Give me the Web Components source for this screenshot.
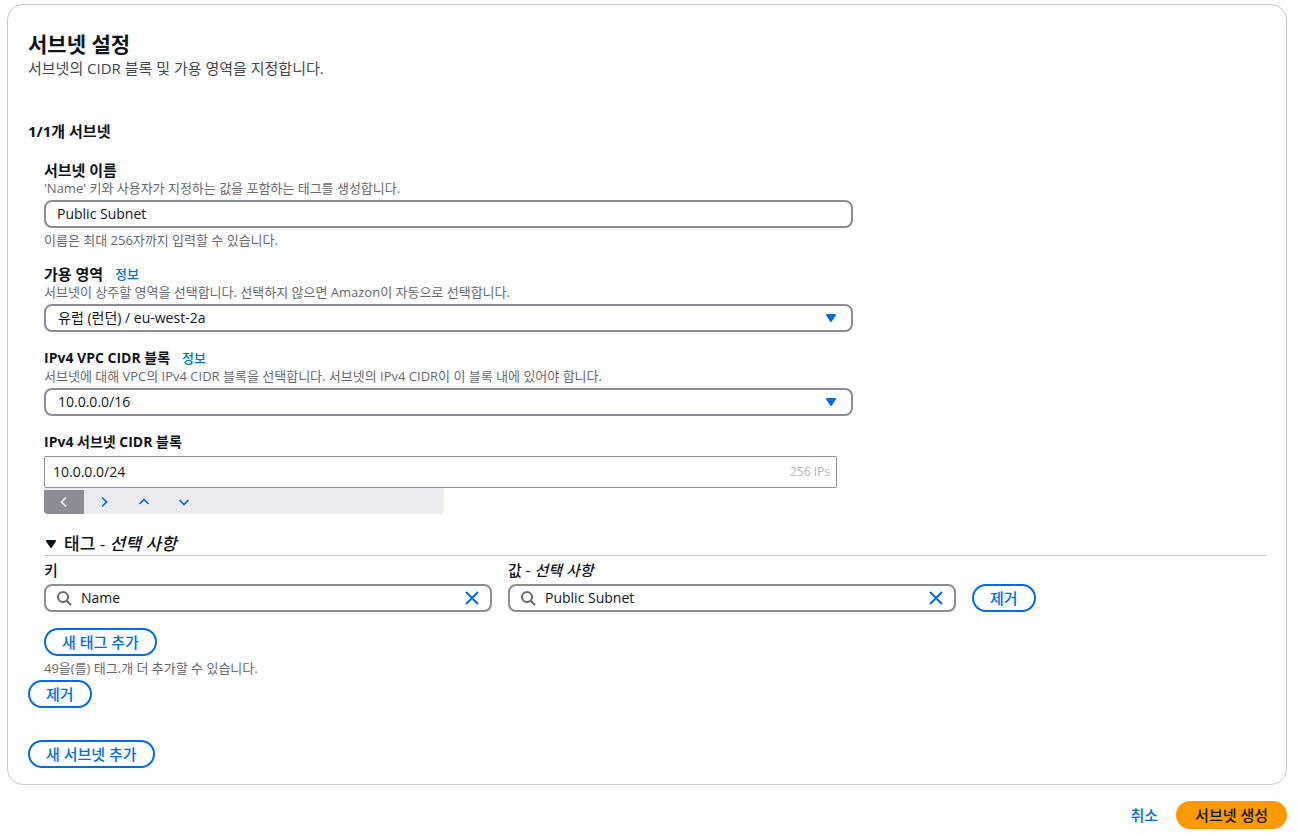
<!DOCTYPE html>
<html lang="ko">
<head>
<meta charset="utf-8">
<meta name="viewport" content="width=device-width, initial-scale=1">
<title>서브넷 생성</title>
<style>
  :root {
    --text: #0f141a;
    --text-muted: #424650;
    --text-hint: #656871;
    --line: #c6c6cd;
    --control-line: #8c8c94;
    --accent: #006ce0;
    --primary: #ff9900;
    --size-title: 21px;
    --size-section: 17px;
    --size-body: 15px;
    --size-value: 14px;
    --size-hint: 13px;
  }
  body {
    margin: 4px 13px 8px 7px;
    background: #fff;
    color: var(--text);
    font-family: "Open Sans", "Noto Sans CJK KR", sans-serif;
    font-size: 14px;
    line-height: 20px;
  }
</style>
</head>
<body>
<subnet-page></subnet-page>

<script>
const define = (name, html, setup) => {
  const template = document.createElement('template');
  template.innerHTML = `<style>
    *, *::before, *::after { box-sizing: border-box; }
    input, select, button { font-family: inherit; }
    svg { display: block; flex: none; }
  </style>${html}`;
  customElements.define(name, class extends HTMLElement {
    constructor() {
      super();
      this.attachShadow({ mode: 'open' }).append(template.content.cloneNode(true));
    }
    connectedCallback() {
      if (setup) setup(this, this.shadowRoot);
    }
  });
};

const fieldStyles = `
  :host { display: block; }
  label { display: block; font-size: var(--size-value); font-weight: 700; line-height: 20px; }
  label:lang(ko) { font-size: var(--label-size, var(--size-value)); }
  .head { display: flex; gap: 12px; align-items: center; }
  .head a { color: var(--accent); font-size: var(--size-hint); font-weight: 500; line-height: 20px; text-decoration: none; }
  .hint { color: var(--text-hint); font-size: var(--size-hint); line-height: 16px; }
  .box { margin-top: 4px; height: 28px; border: 2px solid var(--control-line); border-radius: 8px; background: #fff; }
  input, select {
    width: 100%; min-width: 0; height: 100%; margin: 0; border: 0; outline: 0; background: none;
    color: var(--text); font-size: var(--size-value); line-height: 20px;
  }
`;

define('ui-button', `
  <style>
    :host { display: inline-flex; }
    button {
      height: 28px; padding: 0 16px; border: 2px solid var(--accent); border-radius: 20px;
      background: #fff; color: var(--accent); font-size: var(--size-body); font-weight: 500;
      line-height: 20px; white-space: nowrap; cursor: pointer;
    }
    :host([variant="primary"]) button { padding: 0 17px; background: var(--primary); border-color: var(--primary); color: var(--text); }
    :host([variant="link"]) button { background: none; border-color: transparent; }
  </style>
  <button type="button"><slot></slot></button>
`);

define('text-field', `
  <style>${fieldStyles}
    input { padding: 0 11px 2px; }
    .note { margin-top: 4px; }
  </style>
  <label for="control"></label>
  <div class="hint" id="hint"></div>
  <div class="box"><input id="control" type="text" aria-describedby="hint note"></div>
  <div class="hint note" id="note"><slot></slot></div>
`, (host, root) => {
  root.querySelector('label').textContent = host.getAttribute('label');
  root.querySelector('#hint').textContent = host.getAttribute('hint');
  root.querySelector('input').value = host.getAttribute('value');
});

define('select-field', `
  <style>${fieldStyles}
    .box { display: grid; align-items: center; }
    .box > * { grid-area: 1 / 1; }
    select { appearance: none; padding: 0 40px 0 12px; }
    svg { justify-self: end; margin-right: 12px; pointer-events: none; }
  </style>
  <div class="head"><label for="control"></label><a href="#info">정보</a></div>
  <div class="hint" id="hint"></div>
  <div class="box">
    <select id="control" aria-describedby="hint"><option></option></select>
    <svg width="16" height="16" viewBox="0 0 16 16" aria-hidden="true"><path d="M4 5h8l-4 6z" fill="#006ce0" stroke="#006ce0" stroke-width="2" stroke-linejoin="round"/></svg>
  </div>
`, (host, root) => {
  root.querySelector('label').textContent = host.getAttribute('label');
  root.querySelector('#hint').textContent = host.getAttribute('hint');
  root.querySelector('option').textContent = host.getAttribute('value');
});

define('cidr-field', `
  <style>${fieldStyles}
    :host { padding-right: 16px; }
    .box { display: flex; align-items: center; height: 32px; border-width: 1px; border-radius: 2px; padding: 0 6px 0 8px; }
    input { padding: 0 0 2px; }
    .count { color: #b4b4bb; font-size: 12px; line-height: 16px; white-space: nowrap; }
    .steps { display: flex; max-width: 400px; height: 26px; padding-top: 2px; background: #ebebf0; border-radius: 0 0 4px 4px; overflow: hidden; }
    .steps button { display: grid; place-items: center; width: 40px; padding: 0; border: 0; background: none; color: var(--accent); cursor: pointer; }
    .steps button:disabled { background: var(--control-line); color: #ebebf0; }
    path { fill: none; stroke: currentColor; stroke-width: 1.75; }
  </style>
  <label for="control">IPv4 서브넷 CIDR 블록</label>
  <div class="box"><input id="control" type="text" value="10.0.0.0/24"><span class="count">256 IPs</span></div>
  <div class="steps">
    <button type="button" disabled aria-label="이전 블록"><svg width="16" height="16" viewBox="0 0 16 16"><path d="M10 3.500 5.500 8l4.500 4.500"/></svg></button>
    <button type="button" aria-label="다음 블록"><svg width="16" height="16" viewBox="0 0 16 16"><path d="M6 3.500 10.500 8 6 12.500"/></svg></button>
    <button type="button" aria-label="더 큰 블록"><svg width="16" height="16" viewBox="0 0 16 16"><path d="M3.500 10 8 5.500l4.500 4.500"/></svg></button>
    <button type="button" aria-label="더 작은 블록"><svg width="16" height="16" viewBox="0 0 16 16"><path d="M3.500 6 8 10.500 12.500 6"/></svg></button>
  </div>
`);

define('search-field', `
  <style>${fieldStyles}
    :host { --label-size: var(--size-body); }
    label { font-weight: 500; }
    .box { display: flex; align-items: center; gap: 9px; padding: 0 10px; }
    input { flex: 1; padding: 0 0 2px; }
    button { padding: 0; border: 0; background: none; color: var(--accent); cursor: pointer; }
  </style>
  <label for="control"><slot></slot></label>
  <div class="box">
    <svg width="16" height="16" viewBox="0 0 16 16" aria-hidden="true"><g fill="none" stroke="#656871" stroke-width="2"><circle cx="7" cy="7" r="5"/><path d="m10.700 10.700 4.300 4.300"/></g></svg>
    <input id="control" type="text">
    <button type="button" aria-label="지우기"><svg width="16" height="16" viewBox="0 0 16 16"><path d="m2 2 12 12M14 2 2 14" fill="none" stroke="currentColor" stroke-width="2"/></svg></button>
  </div>
`, (host, root) => {
  root.querySelector('input').value = host.getAttribute('value');
});

define('tag-editor', `
  <style>
    :host { display: block; }
    h3 { display: flex; align-items: center; gap: 6px; height: 26px; margin: 0; padding-top: 2px; border-bottom: 1px solid var(--line); font-size: var(--size-section); font-weight: 500; line-height: 20px; }
    .row { display: grid; grid-template-columns: minmax(0, 448px) minmax(0, 448px) auto; justify-content: start; align-items: end; gap: 16px; margin: 4px 0 16px; }
    .note { margin-top: 4px; color: var(--text-hint); font-size: var(--size-hint); line-height: 16px; }
  </style>
  <h3>
    <svg width="14" height="14" viewBox="0 0 14 14" aria-hidden="true"><path d="M3 4h8l-4 6z" fill="#0f141a" stroke="#0f141a" stroke-width="2" stroke-linejoin="round"/></svg>
    <span>태그 - <em>선택 사항</em></span>
  </h3>
  <div class="row">
    <search-field value="Name">키</search-field>
    <search-field value="Public Subnet">값 - <em>선택 사항</em></search-field>
    <ui-button>제거</ui-button>
  </div>
  <ui-button>새 태그 추가</ui-button>
  <div class="note">49을(를) 태그.개 더 추가할 수 있습니다.</div>
`);

define('settings-card', `
  <style>
    :host { display: block; border: 1px solid var(--line); border-radius: 16px; padding: 27px 20px 16px; }
    h2 { margin: 0; font-size: var(--size-title); line-height: 24px; }
    p { margin: 2px 0 43px; color: var(--text-muted); font-size: var(--size-body); line-height: 20px; }
  </style>
  <h2><slot name="title"></slot></h2>
  <p><slot name="description"></slot></p>
  <slot></slot>
`);

define('subnet-form', `
  <style>
    :host { display: block; }
    h3 { margin: 0 0 19px; font-size: var(--size-body); line-height: 20px; }
    .fields { display: flex; flex-direction: column; gap: 16px; padding-left: 16px; margin-bottom: 4px; }
    .fields > :not(tag-editor) { width: 100%; max-width: 809px; }
    .korean { --label-size: var(--size-body); }
  </style>
  <h3>1/1개 서브넷</h3>
  <div class="fields">
    <text-field class="korean" label="서브넷 이름" hint="'Name' 키와 사용자가 지정하는 값을 포함하는 태그를 생성합니다." value="Public Subnet">이름은 최대 256자까지 입력할 수 있습니다.</text-field>
    <select-field class="korean" label="가용 영역" hint="서브넷이 상주할 영역을 선택합니다. 선택하지 않으면 Amazon이 자동으로 선택합니다." value="유럽 (런던) / eu-west-2a"></select-field>
    <select-field label="IPv4 VPC CIDR 블록" hint="서브넷에 대해 VPC의 IPv4 CIDR 블록을 선택합니다. 서브넷의 IPv4 CIDR이 이 블록 내에 있어야 합니다." value="10.0.0.0/16"></select-field>
    <cidr-field></cidr-field>
    <tag-editor></tag-editor>
  </div>
  <ui-button>제거</ui-button>
`);

define('subnet-page', `
  <style>
    :host { display: block; }
    .add { display: flex; margin-top: 32px; }
    footer { display: flex; justify-content: flex-end; margin-top: 16px; }
  </style>
  <main>
    <settings-card>
      <span slot="title">서브넷 설정</span>
      <span slot="description">서브넷의 CIDR 블록 및 가용 영역을 지정합니다.</span>
      <subnet-form></subnet-form>
      <ui-button class="add">새 서브넷 추가</ui-button>
    </settings-card>
  </main>
  <footer>
    <ui-button variant="link">취소</ui-button>
    <ui-button variant="primary">서브넷 생성</ui-button>
  </footer>
`);
</script>
</body>
</html>
